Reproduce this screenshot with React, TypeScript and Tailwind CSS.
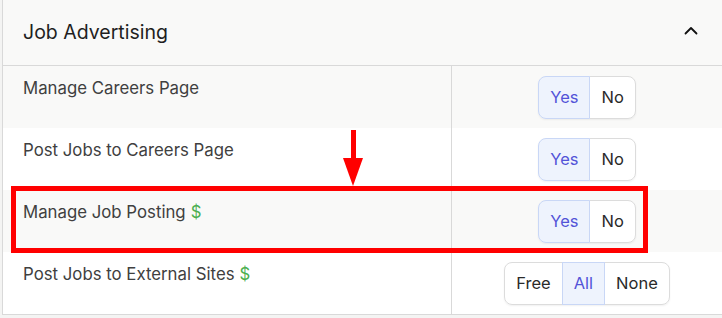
import React, { useState } from "react";

type Row = {
  title: string;
  paid?: boolean;
  options: string[];
  initial: string;
  shade: boolean;
};

const rows: Row[] = [
  { title: "Manage Careers Page", options: ["Yes", "No"], initial: "Yes", shade: true },
  { title: "Post Jobs to Careers Page", options: ["Yes", "No"], initial: "Yes", shade: false },
  { title: "Manage Job Posting", paid: true, options: ["Yes", "No"], initial: "Yes", shade: true },
  { title: "Post Jobs to External Sites", paid: true, options: ["Free", "All", "None"], initial: "All", shade: false },
];

function Segmented({ options, initial }: { options: string[]; initial: string }) {
  const [value, setValue] = useState(initial);
  return (
    <div className="flex h-[43px] rounded-lg shadow-[0_1px_2px_rgba(0,0,0,0.06)]">
      {options.map((o, i) => {
        const active = o === value;
        const first = i === 0;
        const last = i === options.length - 1;
        return (
          <button
            key={o}
            type="button"
            onClick={() => setValue(o)}
            className={`relative flex items-center justify-center px-[11px] text-[16.5px] border
              ${first ? "rounded-l-lg" : "-ml-px"} ${last ? "rounded-r-lg" : ""}
              ${active ? "z-10 bg-[#eef3fd] border-[#c9d7f6] text-[#5353d8]" : "bg-white border-[#dcdcdc] text-[#2a2a2a]"}`}
          >
            {o}
          </button>
        );
      })}
    </div>
  );
}

export default function App() {
  return (
    <div className="relative h-[318px] w-[722px] overflow-hidden bg-[#f4f4f3] font-['Inter',sans-serif]">
      <div className="ml-[2px] border-l border-b border-[#d9d9d9] bg-white">
        {/* header */}
        <div className="flex h-[66px] items-center justify-between border-b border-[#d9d9d9] bg-[#f9f9f8] pl-[20px] pr-[24px]">
          <h2 className="text-[19.5px] text-[#1f1f1f]">Job Advertising</h2>
          <svg width="14" height="10" viewBox="0 0 14 10" fill="none" className="mt-[-3px]">
            <path d="M1.5 7.5 7 2l5.5 5.5" stroke="#111" strokeWidth="1.8" strokeLinecap="round" strokeLinejoin="round" />
          </svg>
        </div>

        {/* rows */}
        {rows.map((r) => (
          <div key={r.title} className={`flex h-[62px] ${r.shade ? "bg-[#f9f9f8]" : "bg-white"}`}>
            <div className="w-[449px] shrink-0 border-r border-[#d9d9d9] pl-[20px] pt-[10px] text-[16.8px] text-[#404040]">
              {r.title}
              {r.paid && <span className="ml-[5px] text-[#4caf50]">$</span>}
            </div>
            <div className="flex flex-1 items-center justify-center">
              <Segmented options={r.options} initial={r.initial} />
            </div>
          </div>
        ))}
      </div>

      {/* annotation: arrow + highlight box */}
      <div className="pointer-events-none absolute left-[343px] top-[130px] flex w-[20px] flex-col items-center">
        <div className="h-[28px] w-[5px] bg-[#ff0000]" />
        <div className="h-0 w-0 border-l-[10px] border-r-[10px] border-t-[28px] border-l-transparent border-r-transparent border-t-[#ff0000]" />
      </div>
      <div className="pointer-events-none absolute left-[11px] top-[186px] h-[67px] w-[637px] border-[5px] border-[#ff0000]" />
    </div>
  );
}
